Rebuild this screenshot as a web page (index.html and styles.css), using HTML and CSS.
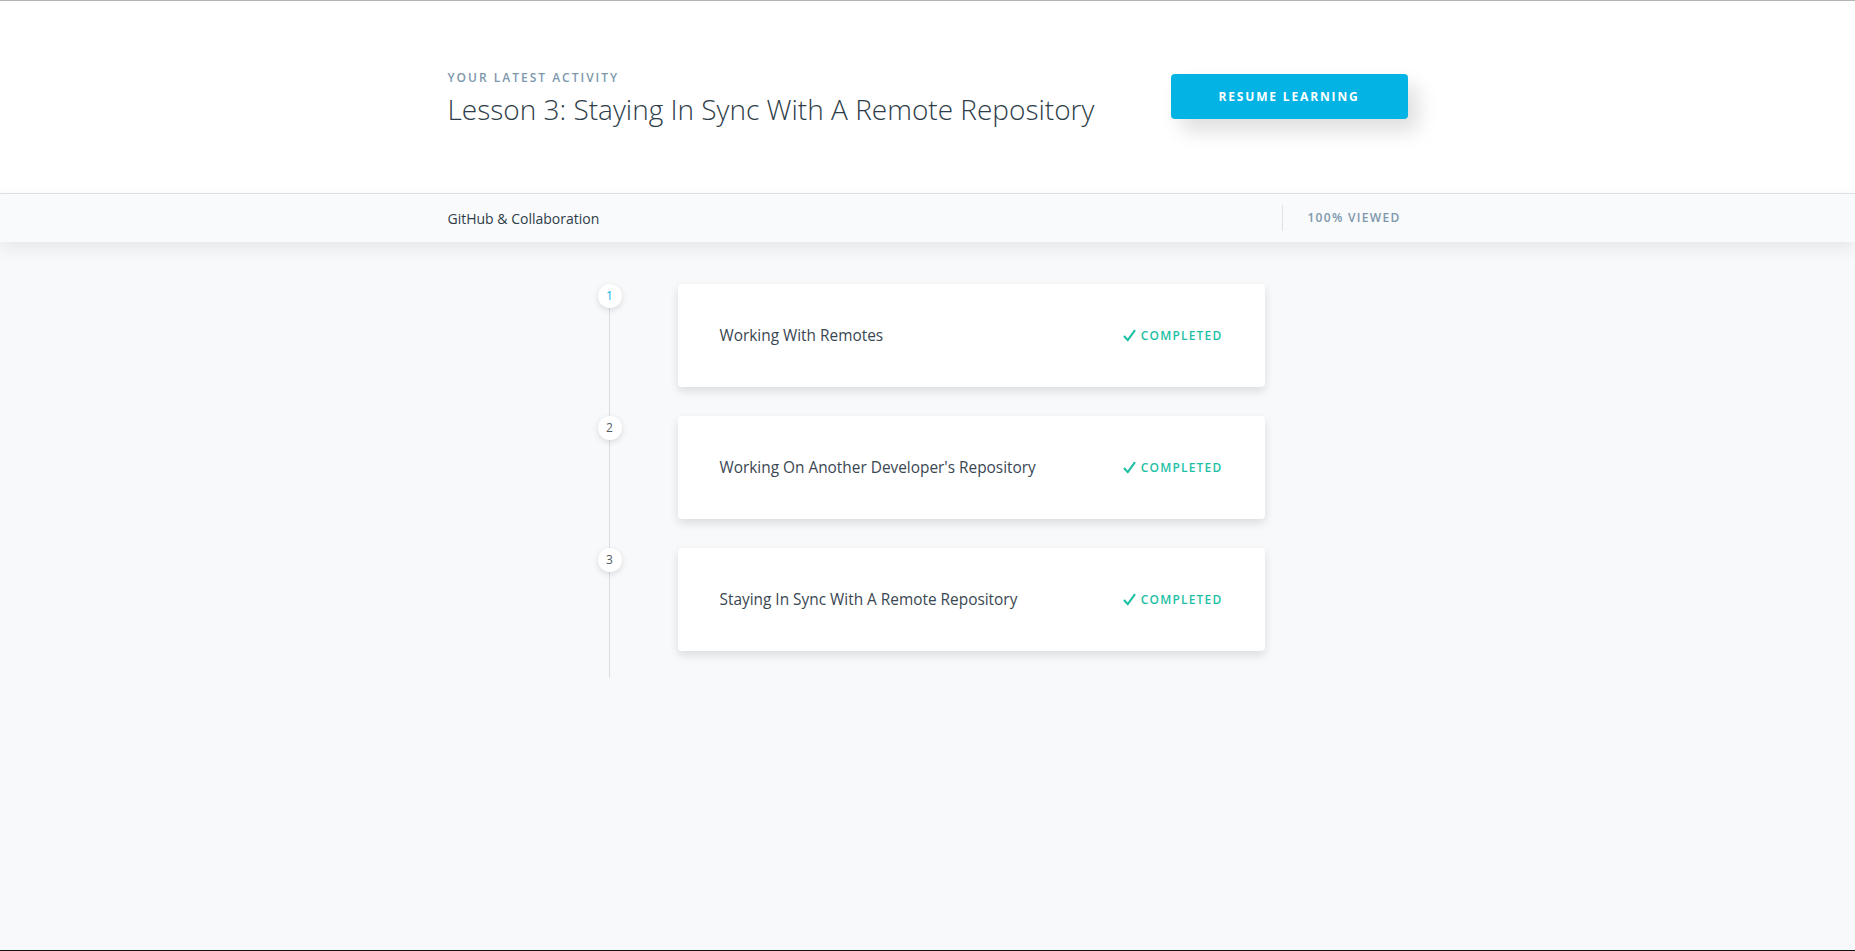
FILE: index.html
```html
<!DOCTYPE html>
<html lang="en">
<head>
<meta charset="utf-8">
<title>Lesson 3: Staying In Sync With A Remote Repository</title>
<link rel="stylesheet" href="styles.css">
</head>
<body>
<div class="page">
  <header class="hero">
    <div class="container hero-inner">
      <div class="activity">
        <div class="eyebrow">Your Latest Activity</div>
        <h1 class="lesson-title">Lesson 3: Staying In Sync With A Remote Repository</h1>
      </div>
      <button class="resume">Resume Learning</button>
    </div>
  </header>
  <div class="subbar">
    <div class="container subbar-inner">
      <div class="course">GitHub &amp; Collaboration</div>
      <div class="progress">100% Viewed</div>
    </div>
  </div>
  <main class="container">
    <ol class="steps">
      <li class="step">
        <span class="dot active">1</span>
        <div class="card">
          <span class="card-title">Working With Remotes</span>
          <span class="status"><svg class="check" viewBox="0 0 13 13" width="13" height="13"><path d="M1 7 L4.8 11.2 L12 1.2" fill="none" stroke="currentColor" stroke-width="2.1"/></svg>Completed</span>
        </div>
      </li>
      <li class="step">
        <span class="dot">2</span>
        <div class="card">
          <span class="card-title">Working On Another Developer's Repository</span>
          <span class="status"><svg class="check" viewBox="0 0 13 13" width="13" height="13"><path d="M1 7 L4.8 11.2 L12 1.2" fill="none" stroke="currentColor" stroke-width="2.1"/></svg>Completed</span>
        </div>
      </li>
      <li class="step">
        <span class="dot">3</span>
        <div class="card">
          <span class="card-title">Staying In Sync With A Remote Repository</span>
          <span class="status"><svg class="check" viewBox="0 0 13 13" width="13" height="13"><path d="M1 7 L4.8 11.2 L12 1.2" fill="none" stroke="currentColor" stroke-width="2.1"/></svg>Completed</span>
        </div>
      </li>
    </ol>
  </main>
</div>
</body>
</html>
```
FILE: styles.css
```css
* { box-sizing: border-box; }
html, body { margin: 0; padding: 0; }
body {
  font-family: "Open Sans", "Noto Sans", "Liberation Sans", sans-serif;
  background: #f8f9fb;
  color: #2e3d49;
}
.page {
  min-height: 100vh;
  border-top: 1px solid #b3b3b3;
  border-bottom: 1px solid #111;
  background: #f8f9fb;
}
.container {
  width: 960px;
  margin: 0 auto;
}
.hero {
  background: #fff;
  height: 193px;
  border-bottom: 1px solid #dfe3e8;
}
.hero-inner {
  height: 100%;
  display: flex;
  align-items: center;
  justify-content: space-between;
}
.activity { padding-top: 3px; }
.eyebrow {
  font-size: 12px;
  font-weight: 600;
  letter-spacing: 2px;
  text-transform: uppercase;
  color: #7d97ad;
  line-height: 16px;
}
.lesson-title {
  margin: 5px 0 0;
  font-size: 28px;
  font-weight: 300;
  line-height: 36px;
  color: #2e3d49;
}
.resume {
  width: 237px;
  height: 45px;
  border: 0;
  border-radius: 4px;
  background: #02b3e4;
  color: #fff;
  font-family: inherit;
  font-size: 12px;
  font-weight: 700;
  letter-spacing: 1.85px;
  text-transform: uppercase;
  box-shadow: 10px 12px 20px rgba(0, 0, 0, 0.13);
  margin-top: -1px;
}
.subbar {
  height: 48px;
  background: #f9fafb;
  box-shadow: 0 6px 18px rgba(0, 0, 0, 0.08);
  position: relative;
}
.subbar-inner {
  height: 100%;
  display: flex;
  align-items: center;
  justify-content: space-between;
}
.course {
  font-size: 14px;
  color: #2e3d49;
}
.progress {
  border-left: 1px solid #dbe2e8;
  height: 26px;
  line-height: 26px;
  padding-left: 24px;
  margin-right: 7px;
  font-size: 12px;
  font-weight: 600;
  letter-spacing: 1.3px;
  text-transform: uppercase;
  color: #7d97ad;
}
.steps {
  list-style: none;
  margin: 0;
  padding: 42px 0 0 150px;
  position: relative;
}
.steps::before {
  content: "";
  position: absolute;
  left: 161px;
  top: 54px;
  bottom: 0;
  width: 1px;
  background: #d8dee4;
}
.step {
  display: flex;
  align-items: flex-start;
  gap: 56px;
  padding-bottom: 29px;
}
.step:last-child { padding-bottom: 27px; }
.dot {
  position: relative;
  z-index: 1;
  flex: 0 0 24px;
  width: 24px;
  height: 24px;
  border-radius: 50%;
  background: #fff;
  box-shadow: 0 2px 6px rgba(0, 0, 0, 0.13);
  font-size: 12px;
  line-height: 24px;
  text-align: center;
  color: #525c65;
}
.dot.active { color: #02b3e4; }
.card {
  width: 587px;
  height: 103px;
  background: #fff;
  border-radius: 4px;
  box-shadow: 0 4px 10px rgba(0, 0, 0, 0.12);
  display: flex;
  align-items: center;
  justify-content: space-between;
  padding: 0 42px 0 42px;
}
.card-title {
  font-size: 15.4px;
  color: #3a4752;
}
.status {
  display: flex;
  align-items: center;
  gap: 5px;
  font-size: 12px;
  font-weight: 600;
  letter-spacing: 1.2px;
  text-transform: uppercase;
  color: #1dbfa5;
}
.check { display: block; margin-top: -1px; }
```
